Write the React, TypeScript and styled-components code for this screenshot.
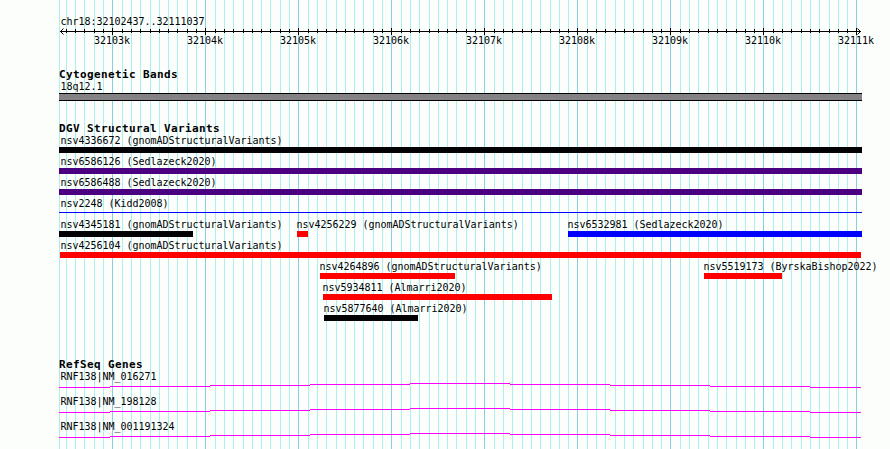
import styled, { createGlobalStyle } from "styled-components"

const VIEW_LEFT = 59
const VIEW_WIDTH = 803
const KB_ORIGIN = 53.81
const KB_WIDTH = 93.023

const Colors = {
    page: "#fcfefc",
    minorLine: "#afeeee",
    majorLine: "#87ceeb",
    loss: "#ff0000",
    gain: "#0000ff",
    complex: "#020204",
    inversion: "#4b0082",
    gene: "#ff00ff",
    band: "#848284",
}

type Variant = {
    name: string
    start: number
    end: number
    color: string
    labelOffset?: number
    thin?: boolean
}

const lanes: Variant[][] = [
    [{ name: "nsv4336672 (gnomADStructuralVariants)", start: 0, end: 803, color: Colors.complex, labelOffset: 1.5 }],
    [{ name: "nsv6586126 (Sedlazeck2020)", start: 0, end: 803, color: Colors.inversion, labelOffset: 1.5 }],
    [{ name: "nsv6586488 (Sedlazeck2020)", start: 0, end: 803, color: Colors.inversion, labelOffset: 1.5 }],
    [{ name: "nsv2248 (Kidd2008)", start: 0, end: 803, color: Colors.gain, labelOffset: 1.5, thin: true }],
    [
        { name: "nsv4345181 (gnomADStructuralVariants)", start: 0, end: 134, color: Colors.complex, labelOffset: 1.5 },
        { name: "nsv4256229 (gnomADStructuralVariants)", start: 238, end: 249, color: Colors.loss },
        { name: "nsv6532981 (Sedlazeck2020)", start: 509, end: 803, color: Colors.gain },
    ],
    [{ name: "nsv4256104 (gnomADStructuralVariants)", start: 1, end: 802, color: Colors.loss, labelOffset: 0.5 }],
    [
        { name: "nsv4264896 (gnomADStructuralVariants)", start: 261, end: 396, color: Colors.loss },
        { name: "nsv5519173 (ByrskaBishop2022)", start: 645, end: 723, color: Colors.loss },
    ],
    [{ name: "nsv5934811 (Almarri2020)", start: 264, end: 493, color: Colors.loss }],
    [{ name: "nsv5877640 (Almarri2020)", start: 265, end: 359, color: Colors.complex }],
]

const genes = ["RNF138|NM_016271", "RNF138|NM_198128", "RNF138|NM_001191324"]

// one tick per 100 bp, every tenth one is a full kb
const ticks = Array.from({ length: 86 }, (_, i) => i - 5).map(i => ({
    x: Math.floor(KB_ORIGIN + i * KB_WIDTH / 10),
    major: i % 10 === 0,
})).filter(t => t.x <= 797)

const kbLabels = Array.from({ length: 9 }, (_, i) => ({
    text: `${32103 + i}k`,
    x: Math.floor(KB_ORIGIN + i * KB_WIDTH),
}))

const GridLines = () => (
    <GridSvg width={VIEW_WIDTH} height={449} shapeRendering="crispEdges">
        <rect x={0} y={0} width={1} height={449} fill={Colors.minorLine} />
        {ticks.map(t => (
            <rect key={t.x} x={t.x} y={0} width={1} height={449} fill={t.major ? Colors.majorLine : Colors.minorLine} />
        ))}
    </GridSvg>
)

const Ruler = () => (
    <Drawing width={VIEW_WIDTH} height={7}>
        <g shapeRendering="crispEdges">
            <rect x={1} y={3} width={801} height={1} />
            {ticks.map(t => (
                <rect key={t.x} x={t.x} y={t.major ? 0 : 1} width={1} height={t.major ? 7 : 4} />
            ))}
        </g>
        <path d="M4.5 .5 1.5 3.5l3 3M798.5 .5l3 3-3 3" fill="none" stroke="#000" />
    </Drawing>
)

const GeneLine = () => (
    <Drawing width={VIEW_WIDTH} height={5} shapeRendering="crispEdges">
        {[4, 3, 2, 1, 0, 1, 2, 3, 4].map((y, i) => {
            const from = i === 0 ? 0 : i * 100 - 49
            const to = Math.min(i * 100 + 51, 802)
            return <rect key={i} x={from} y={y} width={to - from} height={1} fill={Colors.gene} />
        })}
    </Drawing>
)

export default () => {

    return (
        <Frame>
            <GlobalStyle />
            <GridLines />
            <Content>
                <Header>
                    <Label $offset={1.5}>chr18:32102437..32111037</Label>
                    <Ruler />
                    <Scale>
                        {kbLabels.map(k => (
                            <ScaleText key={k.text} style={{ marginLeft: k.x - 18 }}>{k.text}</ScaleText>
                        ))}
                    </Scale>
                </Header>
                <Track $gap={21}>
                    <Title>Cytogenetic Bands</Title>
                    <Label $offset={1.5}>18q12.1</Label>
                    <Band />
                </Track>
                <Track $gap={21}>
                    <Title>DGV Structural Variants</Title>
                    {lanes.map((lane, i) => (
                        <Lane key={i}>
                            {lane.map(v => (
                                <Feature key={v.name} style={{ marginLeft: v.start }}>
                                    <Label $offset={v.labelOffset ?? -0.4}>{v.name}</Label>
                                    <Bar $color={v.color} $thin={v.thin} style={{ width: v.end - v.start }} />
                                </Feature>
                            ))}
                        </Lane>
                    ))}
                </Track>
                <Track $gap={34}>
                    <Title>RefSeq Genes</Title>
                    {genes.map(name => (
                        <Gene key={name}>
                            <Label $offset={1.5}>{name}</Label>
                            <GeneLine />
                        </Gene>
                    ))}
                </Track>
            </Content>
        </Frame>
    )
}

const GlobalStyle = createGlobalStyle`
    body {
        margin:0;
        background:${Colors.page};
    }
`

const Frame = styled.div`
    position:relative;
    box-sizing:border-box;
    width:890px;
    height:449px;
    padding-left:${VIEW_LEFT}px;
    overflow:hidden;
    background:${Colors.page};
    color:#000;
    font-family:"DejaVu Sans Mono", monospace;
`

const GridSvg = styled.svg`
    position:absolute;
    top:0;
    left:${VIEW_LEFT}px;
`

const Content = styled.div`
    position:relative;
    padding-top:16px;
`

const Header = styled.div`
    display:flex;
    flex-direction:column;
`

const Drawing = styled.svg`
    display:block;
`

const Label = styled.div<{ $offset: number }>`
    height:12px;
    margin-left:${p => p.$offset}px;
    font-size:10px;
    line-height:12px;
    letter-spacing:-0.02px;
    white-space:pre;
`

const Scale = styled.div`
    display:grid;
    height:12px;
`

const ScaleText = styled.span`
    grid-area:1 / 1;
    font-size:10px;
    line-height:12px;
    letter-spacing:-0.02px;
    white-space:pre;
`

const Track = styled.section<{ $gap: number }>`
    margin-top:${p => p.$gap}px;
`

const Title = styled.div`
    height:13px;
    font-size:11px;
    font-weight:700;
    line-height:13px;
    letter-spacing:0.378px;
    white-space:pre;
`

const Band = styled.div`
    box-sizing:border-box;
    width:${VIEW_WIDTH}px;
    height:8px;
    border:solid #000;
    border-width:1px 0;
    background:${Colors.band};
`

const Lane = styled.div`
    display:grid;
    height:21px;
`

const Feature = styled.div`
    grid-area:1 / 1;
`

const Bar = styled.div<{ $color: string; $thin?: boolean }>`
    height:${p => p.$thin ? 1 : 6}px;
    margin-top:${p => p.$thin ? 2 : 0}px;
    background:${p => p.$color};
`

const Gene = styled.div`
    height:25px;
`
